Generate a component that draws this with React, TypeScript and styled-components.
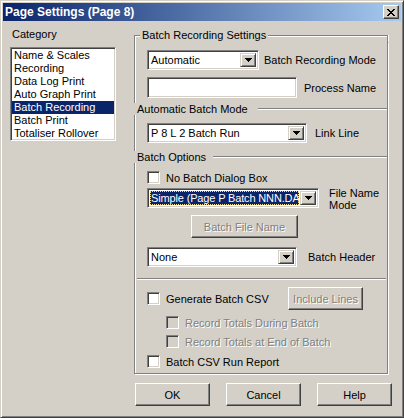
import styled, { createGlobalStyle } from "styled-components";

const GlobalStyle = createGlobalStyle`
  html, body {
    margin: 0;
    padding: 0;
    background: #d4d0c8;
  }
  body {
    font-family: "Liberation Sans", Arial, sans-serif;
    font-size: 11px;
    color: #000;
  }
`;

const categories = [
  'Name & Scales',
  'Recording',
  'Data Log Print',
  'Auto Graph Print',
  'Batch Recording',
  'Batch Print',
  'Totaliser Rollover',
];

const closeGlyph =
  'M0 0h2v1h-2zM6 0h2v1h-2zM1 1h2v1h-2zM5 1h2v1h-2zM2 2h4v1h-4zM3 3h2v1h-2zM2 4h4v1h-4zM1 5h2v1h-2zM5 5h2v1h-2zM0 6h2v1h-2zM6 6h2v1h-2z';

const arrowGlyph = 'M0 0h7v1h-7zM1 1h5v1h-5zM2 2h3v1h-3zM3 3h1v1h-1z';

function Combo({ value, width, focused }: { value: string; width: number; focused?: boolean }) {
  return (
    <ComboBox style={{ width }}>
      <ComboText $focused={focused}>{value}</ComboText>
      <DropButton>
        <svg width="7" height="4" viewBox="0 0 7 4" shapeRendering="crispEdges">
          <path d={arrowGlyph} fill="#000" />
        </svg>
      </DropButton>
    </ComboBox>
  );
}

function Check({ label, disabled }: { label: string; disabled?: boolean }) {
  return (
    <CheckItem>
      <CheckBox $disabled={disabled} />
      <CheckLabel $disabled={disabled}>{label}</CheckLabel>
    </CheckItem>
  );
}

export default function App() {
  return (
    <>
      <GlobalStyle />
      <Window>
        <TitleBar>
          <Title>Page Settings (Page 8)</Title>
          <CloseButton>
            <svg width="8" height="7" viewBox="0 0 8 7" shapeRendering="crispEdges">
              <path d={closeGlyph} fill="#000" />
            </svg>
          </CloseButton>
        </TitleBar>

        <Body>
          <Main>
            <LeftCol>
              <CategoryLabel>Category</CategoryLabel>
              <ListBox>
                {categories.map((c) => (
                  <ListItem key={c} $selected={c === 'Batch Recording'}>
                    {c}
                  </ListItem>
                ))}
              </ListBox>
            </LeftCol>

            <RightCol>
              <TopHeader>
                <CornerLine />
                <HeaderLabel>Batch Recording Settings</HeaderLabel>
                <TopLine />
              </TopHeader>

              <Panel>
                <Section $pb={5}>
                  <Row $mt={8}>
                    <Combo value="Automatic" width={112} />
                    <SideLabel $ml={5}>Batch Recording Mode</SideLabel>
                  </Row>
                  <Row $mt={7}>
                    <TextInput />
                    <SideLabel $ml={7}>Process Name</SideLabel>
                  </Row>
                </Section>

                <SubHeader>
                  <SubLabel>Automatic Batch Mode</SubLabel>
                  <EtchedLine $ml={10} />
                </SubHeader>

                <Section $pb={8}>
                  <Row $mt={8}>
                    <Combo value="P 8 L 2 Batch Run" width={160} />
                    <SideLabel $ml={8}>Link Line</SideLabel>
                  </Row>
                </Section>

                <SubHeader>
                  <SubLabel>Batch Options</SubLabel>
                  <EtchedLine $ml={7} />
                </SubHeader>

                <Section $pb={5}>
                  <Row $mt={8}>
                    <Check label="No Batch Dialog Box" />
                  </Row>
                  <TopRow $mt={4}>
                    <Combo value="Simple (Page P Batch NNN.DA" width={172} focused />
                    <StackLabel>
                      File Name
                      <br />
                      Mode
                    </StackLabel>
                  </TopRow>
                  <Row $mt={7}>
                    <PushButton $width={107} $ml={44} disabled>
                      Batch File Name
                    </PushButton>
                  </Row>
                  <Row $mt={9}>
                    <Combo value="None" width={150} />
                    <SideLabel $ml={11}>Batch Header</SideLabel>
                  </Row>
                  <Separator />
                  <Row $mt={7}>
                    <CheckSlot>
                      <Check label="Generate Batch CSV" />
                    </CheckSlot>
                    <PushButton $width={75} disabled>
                      Include Lines
                    </PushButton>
                  </Row>
                  <Row $mt={6} $ml={19}>
                    <Check label="Record Totals During Batch" disabled />
                  </Row>
                  <Row $mt={6} $ml={19}>
                    <Check label="Record Totals at End of Batch" disabled />
                  </Row>
                  <Row $mt={7}>
                    <Check label="Batch CSV Run Report" />
                  </Row>
                </Section>
              </Panel>
            </RightCol>
          </Main>

          <Footer>
            <PushButton $width={75}>OK</PushButton>
            <PushButton $width={75}>Cancel</PushButton>
            <PushButton $width={75}>Help</PushButton>
          </Footer>
        </Body>
      </Window>
    </>
  );
}

const Window = styled.div`
  width: 404px;
  height: 418px;
  box-sizing: border-box;
  border: 1px solid;
  border-color: #d4d0c8 #404040 #404040 #d4d0c8;
  box-shadow: inset 1px 1px 0 #fff, inset -1px -1px 0 #808080;
  padding: 2px;
  display: flex;
  flex-direction: column;
  background: #d4d0c8;
`;

const TitleBar = styled.div`
  height: 18px;
  flex-shrink: 0;
  display: flex;
  align-items: center;
  padding: 0 2px 0 2px;
  background: linear-gradient(to right, #0a246a, #a6caf0);
`;

const Title = styled.div`
  color: #fff;
  font-weight: bold;
  font-size: 12px;
  white-space: nowrap;
`;

const CloseButton = styled.div`
  margin-left: auto;
  width: 16px;
  height: 14px;
  box-sizing: border-box;
  background: #d4d0c8;
  border: 1px solid;
  border-color: #fff #404040 #404040 #fff;
  box-shadow: inset -1px -1px 0 #808080;
  display: flex;
  align-items: center;
  justify-content: center;
  padding-right: 1px;

  svg {
    display: block;
  }
`;

const Body = styled.div`
  flex: 1;
  display: flex;
  flex-direction: column;
  padding: 7px 0 0 7px;
`;

const Main = styled.div`
  display: flex;
  align-items: flex-start;
`;

const LeftCol = styled.div`
  width: 106px;
  display: flex;
  flex-direction: column;
`;

const CategoryLabel = styled.div`
  line-height: 13px;
  padding-left: 2px;
`;

const Sunken = styled.div`
  box-sizing: border-box;
  background: #fff;
  border: 1px solid;
  border-color: #808080 #fff #fff #808080;
  box-shadow: inset 1px 1px 0 #404040, inset -1px -1px 0 #d4d0c8;
`;

const ListBox = styled(Sunken)`
  margin-top: 6px;
  height: 94px;
  padding: 1px;
  overflow: hidden;
`;

const ListItem = styled.div<{ $selected?: boolean }>`
  height: 13px;
  line-height: 13px;
  padding-left: 2px;
  white-space: nowrap;
  background: ${({ $selected }) => ($selected ? '#0a246a' : 'transparent')};
  color: ${({ $selected }) => ($selected ? '#fff' : '#000')};
`;

const RightCol = styled.div`
  margin-left: 18px;
  width: 254px;
  display: flex;
  flex-direction: column;
`;

const TopHeader = styled.div`
  height: 14px;
  display: flex;
  align-items: center;
`;

const CornerLine = styled.div`
  align-self: flex-end;
  width: 6px;
  height: 7px;
  box-sizing: border-box;
  border-top: 1px solid #808080;
  border-left: 1px solid #808080;
  box-shadow: inset 1px 1px 0 #fff;
`;

const HeaderLabel = styled.div`
  padding: 0 2px;
  line-height: 13px;
  white-space: nowrap;
`;

const TopLine = styled.div`
  align-self: flex-end;
  flex: 1;
  height: 7px;
  box-sizing: border-box;
  border-top: 1px solid #808080;
  border-right: 1px solid #808080;
  box-shadow: inset 0 1px 0 #fff, 1px 0 0 #fff;
`;

const Panel = styled.div`
  border-right: 1px solid #808080;
  border-bottom: 1px solid #808080;
  box-shadow: 1px 1px 0 #fff;
  display: flex;
  flex-direction: column;
`;

const Section = styled.div<{ $pb: number }>`
  border-left: 1px solid #808080;
  box-shadow: inset 1px 0 0 #fff;
  padding: 0 0 ${({ $pb }) => $pb}px 12px;
  display: flex;
  flex-direction: column;
`;

const SubHeader = styled.div`
  height: 12px;
  display: flex;
  align-items: center;
`;

const SubLabel = styled.div`
  padding-left: 3px;
  line-height: 12px;
  white-space: nowrap;
`;

const EtchedLine = styled.div<{ $ml: number }>`
  flex: 1;
  height: 0;
  margin-left: ${({ $ml }) => $ml}px;
  border-top: 1px solid #808080;
  border-bottom: 1px solid #fff;
`;

const Separator = styled.div`
  height: 0;
  margin: 11px 1px 0 -10px;
  border-top: 1px solid #808080;
  border-bottom: 1px solid #fff;
`;

const Row = styled.div<{ $mt: number; $ml?: number }>`
  display: flex;
  align-items: center;
  margin-top: ${({ $mt }) => $mt}px;
  margin-left: ${({ $ml }) => $ml ?? 0}px;
`;

const TopRow = styled.div<{ $mt: number }>`
  display: flex;
  align-items: flex-start;
  height: 20px;
  margin-top: ${({ $mt }) => $mt}px;
`;

const SideLabel = styled.div<{ $ml: number }>`
  margin-left: ${({ $ml }) => $ml}px;
  white-space: nowrap;
`;

const StackLabel = styled.div`
  margin: -1px 0 0 10px;
  line-height: 12px;
  white-space: nowrap;
`;

const ComboBox = styled(Sunken)`
  height: 20px;
  padding: 2px;
  display: flex;
  align-items: stretch;
`;

const ComboText = styled.div<{ $focused?: boolean }>`
  flex: 1;
  min-width: 0;
  overflow: hidden;
  white-space: nowrap;
  line-height: 14px;
  padding-left: 1px;
  margin-right: 1px;
  letter-spacing: ${({ $focused }) => ($focused ? '-0.15px' : 'normal')};
  background: ${({ $focused }) => ($focused ? '#0a246a' : 'transparent')};
  color: ${({ $focused }) => ($focused ? '#fff' : '#000')};
  outline: ${({ $focused }) => ($focused ? '1px dotted #f5db95' : 'none')};
  outline-offset: -1px;
`;

const DropButton = styled.div`
  width: 16px;
  box-sizing: border-box;
  background: #d4d0c8;
  border: 1px solid;
  border-color: #d4d0c8 #404040 #404040 #d4d0c8;
  box-shadow: inset 1px 1px 0 #fff, inset -1px -1px 0 #808080;
  display: flex;
  align-items: center;
  justify-content: center;

  svg {
    display: block;
  }
`;

const TextInput = styled(Sunken)`
  width: 150px;
  height: 21px;
`;

const PushButton = styled.button<{ $width: number; $ml?: number }>`
  width: ${({ $width }) => $width}px;
  height: 23px;
  margin: 0 0 0 ${({ $ml }) => $ml ?? 0}px;
  padding: 0;
  box-sizing: border-box;
  font-family: "Liberation Sans", Arial, sans-serif;
  font-size: 11px;
  color: #000;
  background: #d4d0c8;
  border: 1px solid;
  border-color: #fff #404040 #404040 #fff;
  box-shadow: inset -1px -1px 0 #808080;
  border-radius: 0;

  &:disabled {
    color: #808080;
    text-shadow: 1px 1px 0 #fff;
  }
`;

const CheckSlot = styled.div`
  width: 141px;
`;

const CheckItem = styled.div`
  display: flex;
  align-items: center;
  height: 13px;
`;

const CheckBox = styled.div<{ $disabled?: boolean }>`
  width: 13px;
  height: 13px;
  box-sizing: border-box;
  background: ${({ $disabled }) => ($disabled ? '#d4d0c8' : '#fff')};
  border: 1px solid;
  border-color: #808080 #fff #fff #808080;
  box-shadow: inset 1px 1px 0 #404040, inset -1px -1px 0 #d4d0c8;
`;

const CheckLabel = styled.div<{ $disabled?: boolean }>`
  margin-left: 6px;
  white-space: nowrap;
  color: ${({ $disabled }) => ($disabled ? '#808080' : '#000')};
  text-shadow: ${({ $disabled }) => ($disabled ? '1px 1px 0 #fff' : 'none')};
`;

const Footer = styled.div`
  display: flex;
  gap: 16px;
  margin-top: 9px;
  padding-left: 125px;
`;
